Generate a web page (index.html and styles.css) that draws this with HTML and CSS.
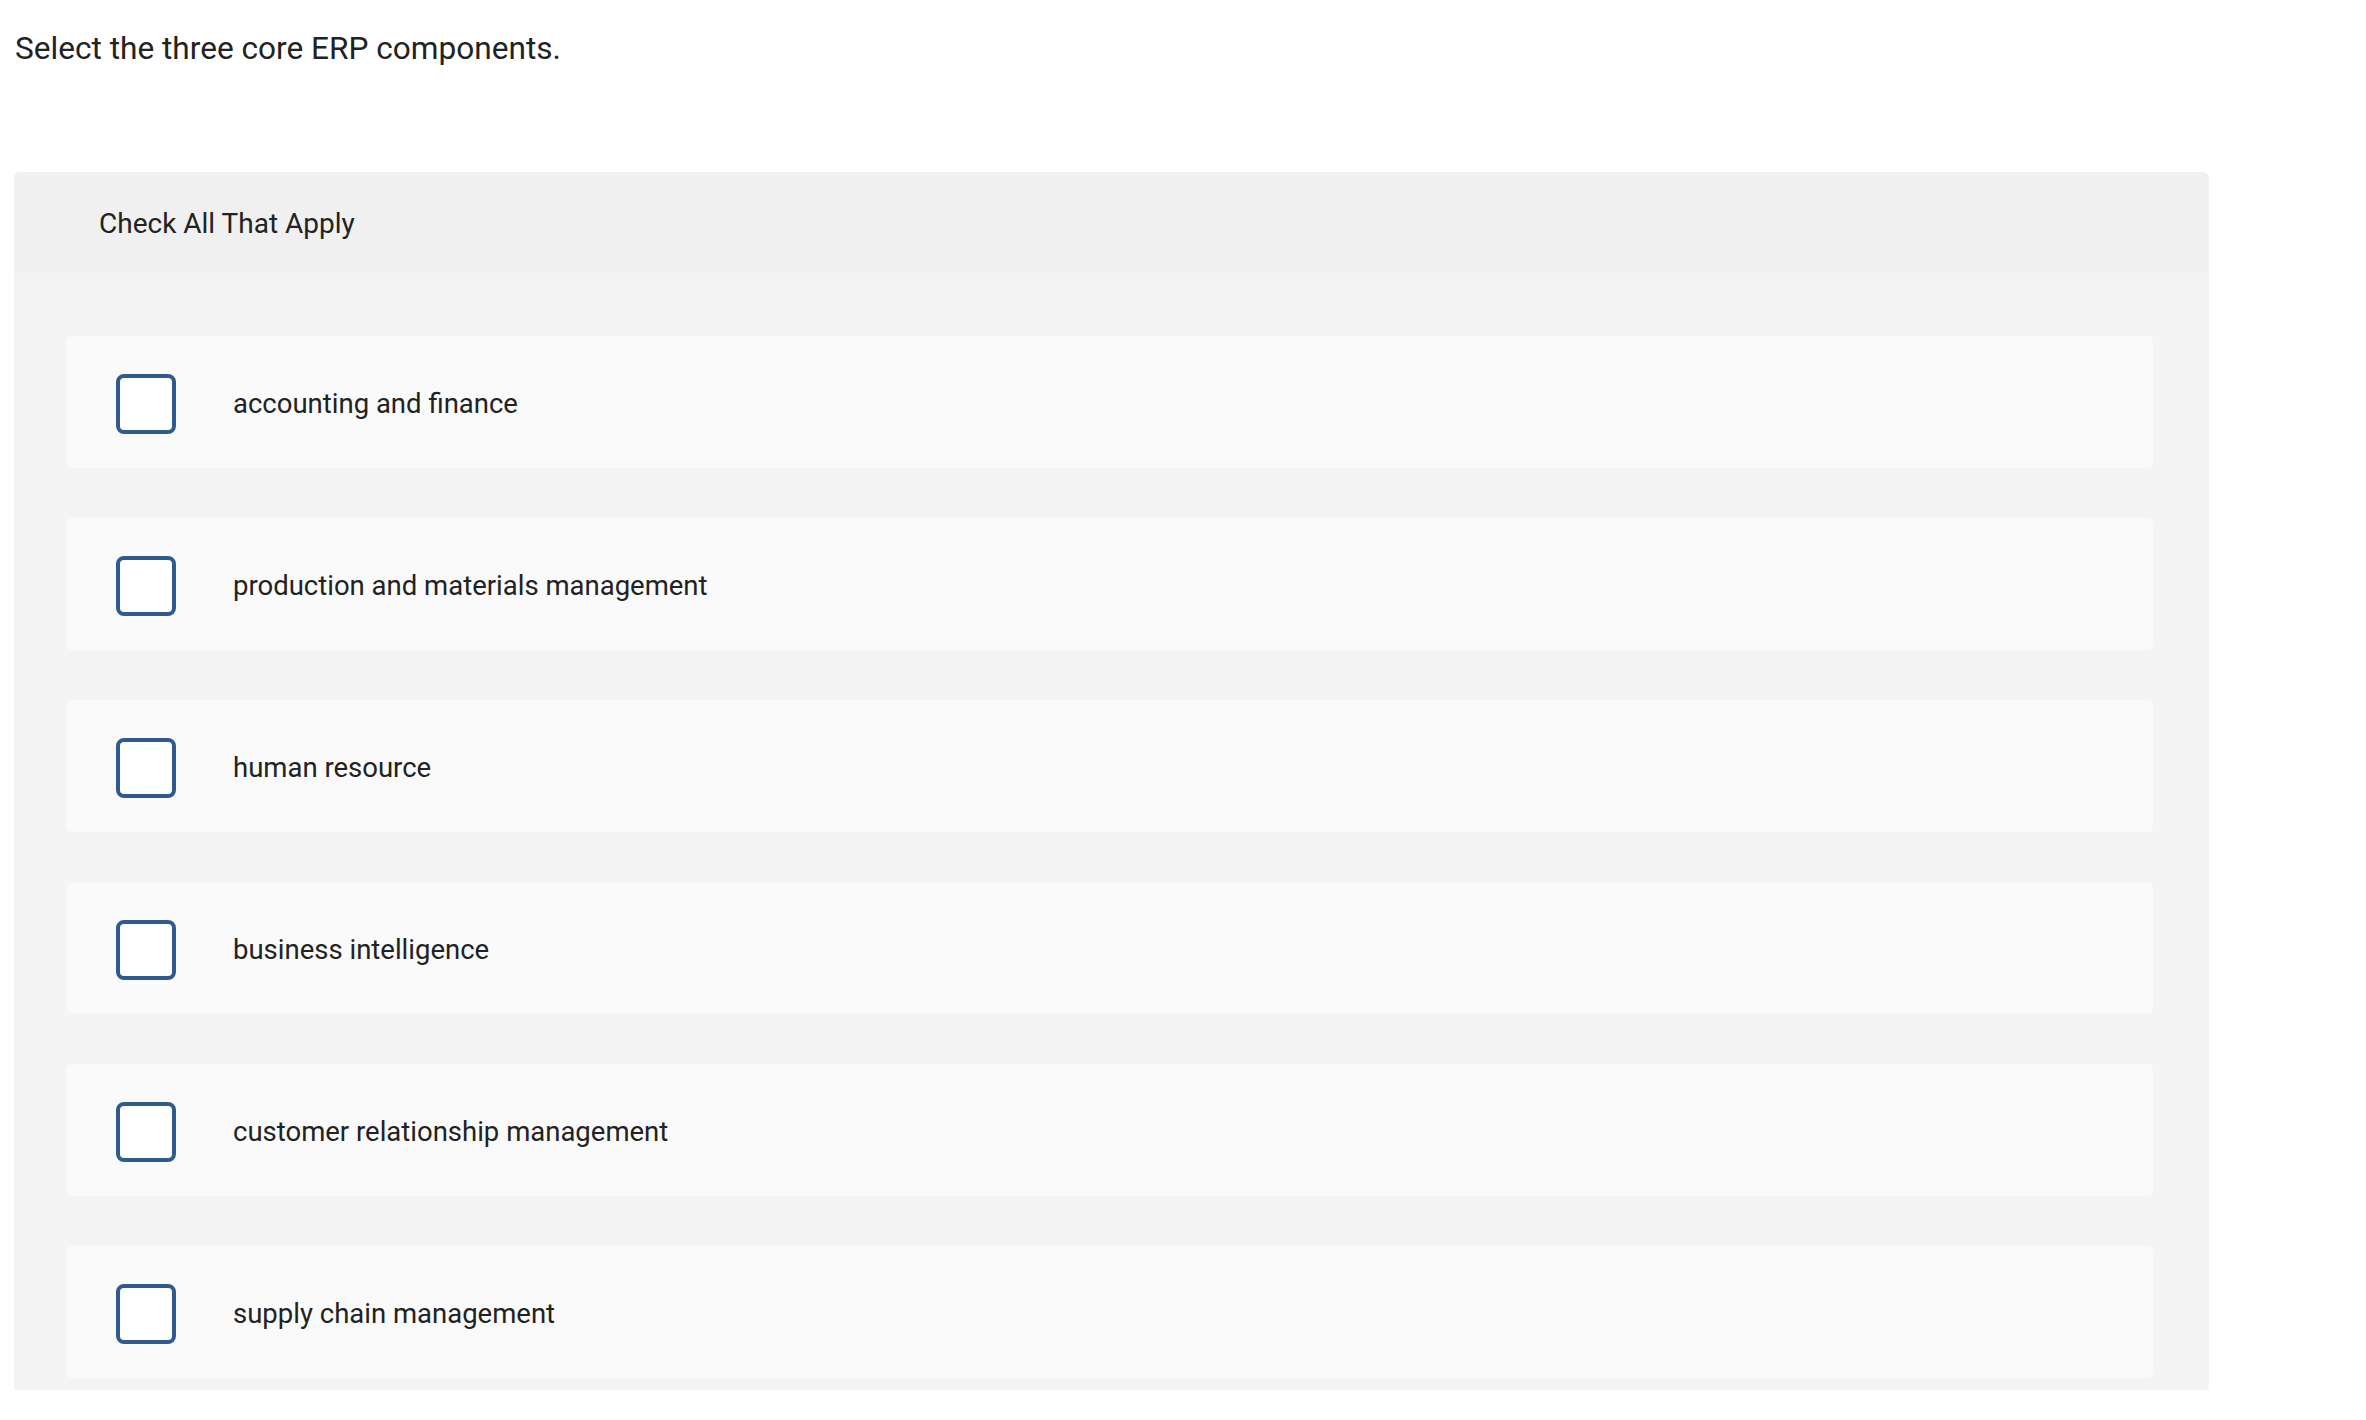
FILE: index.html
```html
<!DOCTYPE html>
<html lang="en">
<head>
  <meta charset="UTF-8">
  <meta name="viewport" content="width=device-width, initial-scale=1.0">
  <title>Check All That Apply</title>
  <link rel="stylesheet" href="styles.css">
</head>
<body>
  <div class="prompt">Select the three core ERP components.</div>
  <div class="answers">
    <div class="answers-head">Check All That Apply</div>
    <div class="answers-list">
      <label class="choice"><span class="box"></span><span class="choice-text">accounting and finance</span></label>
      <label class="choice"><span class="box"></span><span class="choice-text">production and materials management</span></label>
      <label class="choice"><span class="box"></span><span class="choice-text">human resource</span></label>
      <label class="choice"><span class="box"></span><span class="choice-text">business intelligence</span></label>
      <label class="choice"><span class="box"></span><span class="choice-text">customer relationship management</span></label>
      <label class="choice"><span class="box"></span><span class="choice-text">supply chain management</span></label>
    </div>
  </div>
</body>
</html>
```

FILE: styles.css
```css
html,
body {
  margin: 0;
  padding: 0;
  background: #fff;
  color: #222;
  font-family: Roboto, 'Liberation Sans', sans-serif;
}
body {
  padding: 0 14px;
}
.prompt {
  margin-top: 30px;
  padding-left: 1px;
  font-size: 31.6px;
  line-height: 38px;
}
.answers {
  width: 2195px;
  margin-top: 104px;
  background: #f4f4f4;
  border-radius: 6px 6px 0 0;
}
.answers-head {
  display: flex;
  align-items: center;
  box-sizing: border-box;
  height: 100px;
  padding: 2px 0 0 85px;
  font-size: 28px;
  background: #f0f0f0;
  border-radius: 6px 6px 0 0;
}
.answers-list {
  display: flex;
  flex-direction: column;
  gap: 50px;
  padding: 64px 56px 12px 52px;
}
.choice {
  display: flex;
  align-items: center;
  box-sizing: border-box;
  height: 132px;
  padding: 4px 0 0 50px;
  background: #fafafa;
  border-radius: 6px;
  cursor: pointer;
}
.choice .box {
  flex: none;
  box-sizing: border-box;
  width: 60px;
  height: 60px;
  background: #fff;
  border: 4px solid #2f5a8e;
  border-radius: 8px;
}
.choice-text {
  margin-left: 57px;
  font-size: 27.5px;
  line-height: 36px;
}
```
